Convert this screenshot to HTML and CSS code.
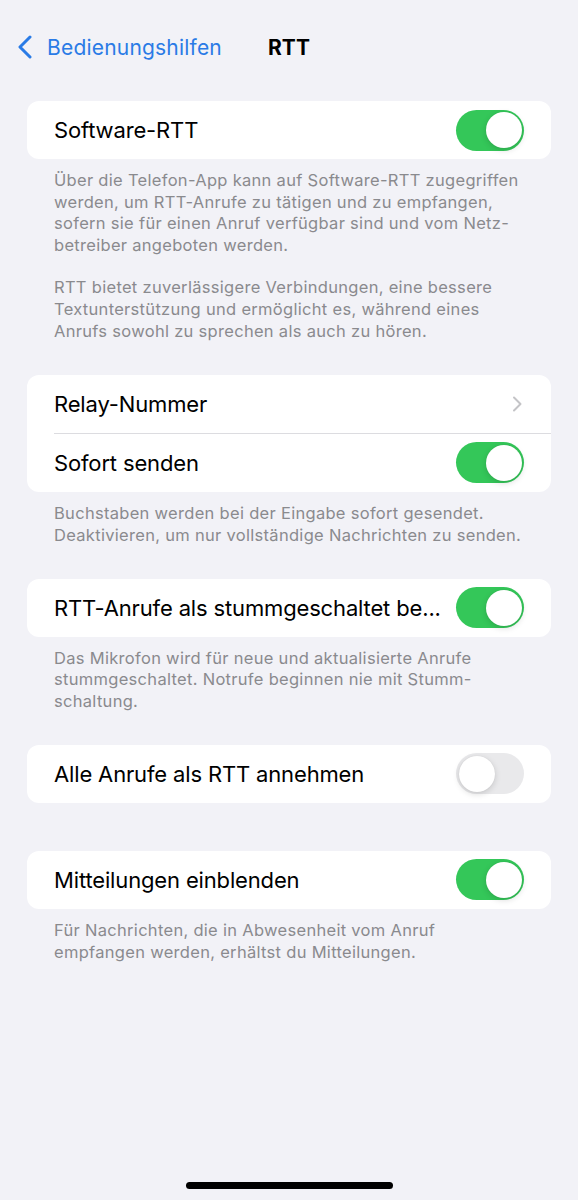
FILE: index.html
```html
<!DOCTYPE html>
<html lang="de">
  <head>
    <meta charset="UTF-8" />
    <meta name="viewport" content="width=device-width, initial-scale=1.0" />
    <title>RTT</title>
    <link rel="stylesheet" href="styles.css">
  </head>
  <body>
    <div class="page">
      <div class="navbar">
        <a class="back" href="#">
          <svg class="back-icon" viewBox="0 0 16 24" width="16" height="24">
            <path d="M13 2 L3 12 L13 22" fill="none" stroke="currentColor" stroke-width="3" stroke-linecap="round" stroke-linejoin="round" />
          </svg>
          <span>Bedienungshilfen</span>
        </a>
        <h1 class="title">RTT</h1>
        <div></div>
      </div>

      <div class="content">
        <div class="group">
          <div class="row">
            <span class="label">Software-RTT</span>
            <span class="switch on"></span>
          </div>
        </div>
        <div class="footer">
          <p>Über die Telefon-App kann auf Software-RTT zugegriffen<br />werden, um RTT-Anrufe zu tätigen und zu empfangen,<br />sofern sie für einen Anruf verfügbar sind und vom Netz-<br />betreiber angeboten werden.</p>
          <p>RTT bietet zuverlässigere Verbindungen, eine bessere<br />Textunterstützung und ermöglicht es, während eines<br />Anrufs sowohl zu sprechen als auch zu hören.</p>
        </div>

        <div class="group">
          <div class="row">
            <span class="label">Relay-Nummer</span>
            <svg class="chevron" viewBox="0 0 10 16" width="10" height="16">
              <path d="M2 1.5 L8.5 8 L2 14.5" fill="none" stroke="currentColor" stroke-width="2" stroke-linecap="round" stroke-linejoin="round" />
            </svg>
          </div>
          <div class="row">
            <span class="label">Sofort senden</span>
            <span class="switch on"></span>
          </div>
        </div>
        <div class="footer">
          <p>Buchstaben werden bei der Eingabe sofort gesendet.<br />Deaktivieren, um nur vollständige Nachrichten zu senden.</p>
        </div>

        <div class="group">
          <div class="row">
            <span class="label">RTT-Anrufe als stummgeschaltet be...</span>
            <span class="switch on"></span>
          </div>
        </div>
        <div class="footer">
          <p>Das Mikrofon wird für neue und aktualisierte Anrufe<br />stummgeschaltet. Notrufe beginnen nie mit Stumm-<br />schaltung.</p>
        </div>

        <div class="group">
          <div class="row">
            <span class="label">Alle Anrufe als RTT annehmen</span>
            <span class="switch"></span>
          </div>
        </div>

        <div class="group spaced">
          <div class="row">
            <span class="label">Mitteilungen einblenden</span>
            <span class="switch on"></span>
          </div>
        </div>
        <div class="footer">
          <p>Für Nachrichten, die in Abwesenheit vom Anruf<br />empfangen werden, erhältst du Mitteilungen.</p>
        </div>
      </div>

      <div class="home-indicator"></div>
    </div>
  </body>
</html>
```

FILE: styles.css
```css
body {
  margin: 0;
  padding: 0;
  background-color: #f2f2f7;
  font-family: Inter, "Noto Sans", sans-serif;
  color: #000;
}
.page {
  min-height: 1200px;
  display: flex;
  flex-direction: column;
}
.navbar {
  display: grid;
  grid-template-columns: 1fr auto 1fr;
  align-items: center;
  height: 38px;
  margin-top: 28px;
  padding: 0 17px;
}
.back {
  display: flex;
  align-items: center;
  gap: 14px;
  color: #2a7be6;
  text-decoration: none;
  font-size: 21px;
  letter-spacing: 0.2px;
}
.back-icon {
  display: block;
}
.title {
  margin: 0;
  font-size: 21px;
  font-weight: 700;
  letter-spacing: 0;
}
.content {
  padding: 35px 27px 0;
}
.group {
  background-color: #fff;
  border-radius: 12px;
  overflow: hidden;
}
.group.spaced {
  margin-top: 48px;
}
.row {
  display: flex;
  align-items: center;
  justify-content: space-between;
  height: 58px;
  padding: 0 27px;
  font-size: 22px;
  letter-spacing: -0.15px;
}
.row + .row {
  border-top: 1px solid #dcdce0;
  margin-left: 27px;
  padding-left: 0;
}
.label {
  white-space: nowrap;
}
.chevron {
  color: #c4c4c7;
  margin-right: 2px;
}
.switch {
  position: relative;
  width: 68px;
  height: 41px;
  border-radius: 21px;
  background-color: #e9e9eb;
  flex-shrink: 0;
}
.switch::after {
  content: "";
  position: absolute;
  top: 2.5px;
  left: 2.5px;
  width: 36px;
  height: 36px;
  border-radius: 50%;
  background-color: #fff;
  box-shadow: 0 2px 6px rgba(0, 0, 0, 0.15), 0 0 1px rgba(0, 0, 0, 0.1);
}
.switch.on {
  background-color: #34c759;
}
.switch.on::after {
  left: 29.5px;
}
.footer {
  padding: 11px 27px 32.3px;
  font-size: 16.5px;
  line-height: 21.7px;
  color: #8a8a8e;
  letter-spacing: 0.3px;
}
.footer p {
  margin: 0;
}
.footer p + p {
  margin-top: 20.6px;
}
.home-indicator {
  width: 207px;
  height: 7px;
  border-radius: 4px;
  background-color: #000;
  margin: auto auto 11px;
}
```
